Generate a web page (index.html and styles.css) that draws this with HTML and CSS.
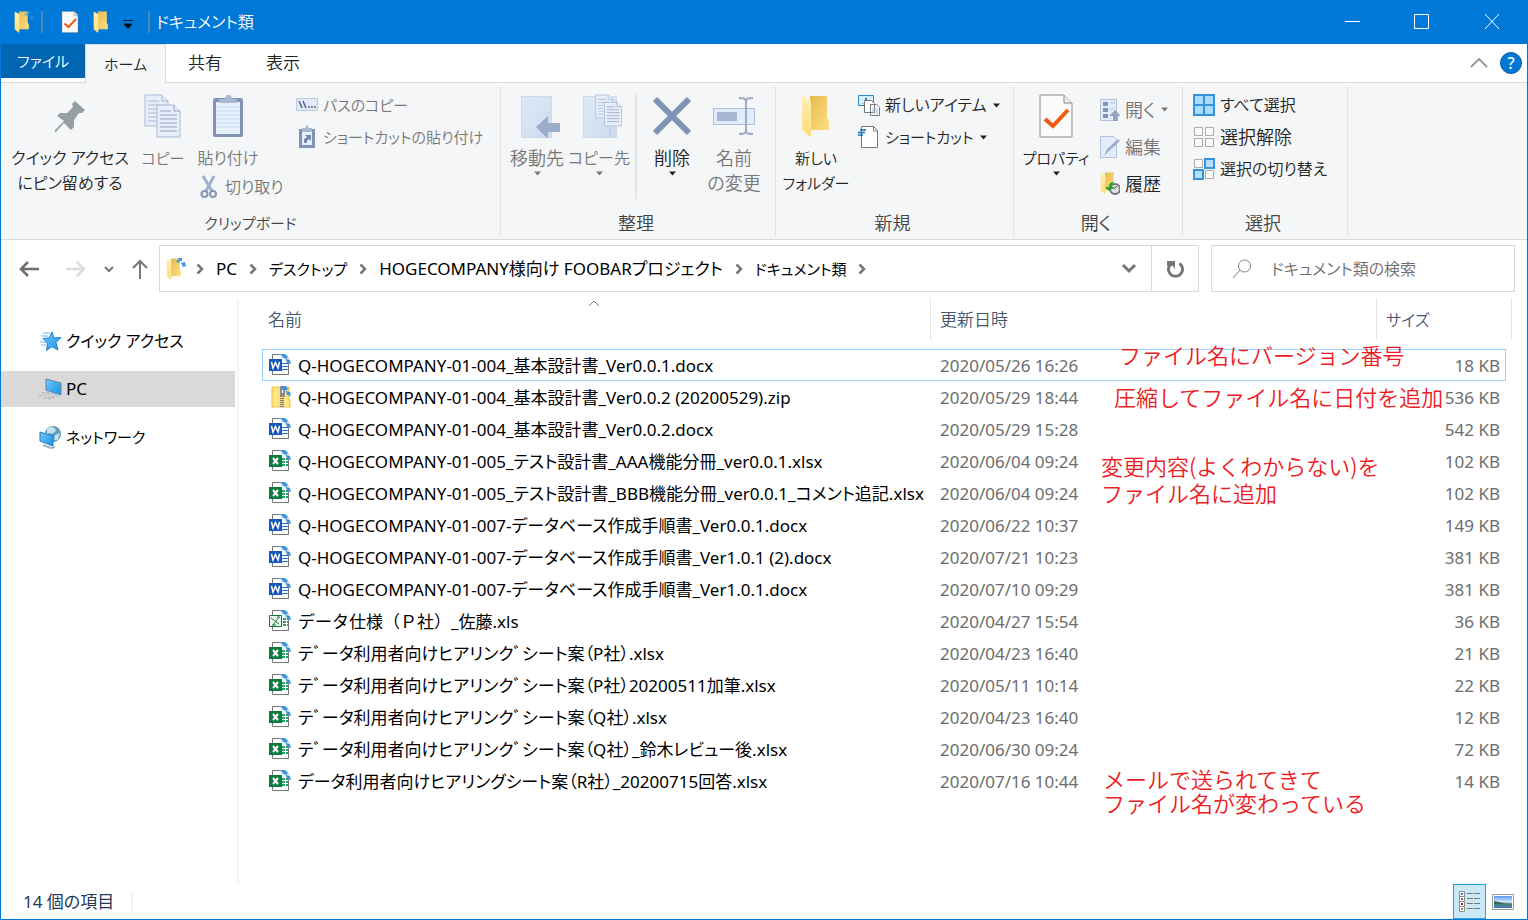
FILE: index.html
```html
<!DOCTYPE html>
<html lang="ja">
<head>
<meta charset="utf-8">
<title>ドキュメント類</title>
<link rel="stylesheet" href="styles.css">
</head>
<body>
<svg class="defs" aria-hidden="true">
  <defs>
    <linearGradient id="g-fold" x1="0" x2="1" y1="0" y2="1"><stop offset="0" stop-color="#e5bb50"/><stop offset="1" stop-color="#ffdf80"/></linearGradient>
    <linearGradient id="g-flap" x1="0" x2="0" y1="0" y2="1"><stop offset="0" stop-color="#fff0b3"/><stop offset="1" stop-color="#ffdc7c"/></linearGradient>
    <linearGradient id="g-blue" x1="0" x2="1" y1="0" y2="1"><stop offset="0" stop-color="#72c8fb"/><stop offset="1" stop-color="#1a93e8"/></linearGradient>
    <linearGradient id="g-pale" x1="0" x2="1" y1="0" y2="1"><stop offset="0" stop-color="#dfe9f7"/><stop offset="1" stop-color="#cbdcee"/></linearGradient>
    <linearGradient id="g-sky" x1="0" x2="0" y1="0" y2="1"><stop offset="0" stop-color="#5b98f5"/><stop offset=".5" stop-color="#d5e8fb"/><stop offset=".65" stop-color="#4d8576"/><stop offset="1" stop-color="#3d78b8"/></linearGradient>
  </defs>
  <symbol id="folder" viewBox="0 0 30 42"><path d="M9 1h17v22l2 2v10H9z" fill="url(#g-fold)"/><path d="M1 1l9 5v35L8 41 1 35z" fill="url(#g-flap)"/></symbol>
  <symbol id="arrows" viewBox="0 0 10 10"><path d="M2 0h4v3H3z M0 3l2-1 2 2-2 1z M5 5l4-1 1 4-3 1z" fill="#3c96e4"/></symbol>
  <symbol id="doc" viewBox="0 0 34 44"><path d="M1 1h24l8 8v34H1z" fill="#fbfbfb" stroke="#8a8a8a"/><path d="M25 1v8h8" fill="#ececec" stroke="#8a8a8a"/><path d="M6 25l8 7 15-16" fill="none" stroke="#f25a13" stroke-width="4"/></symbol>
  <symbol id="down" viewBox="0 0 9 5"><path d="M1 0.5h7L4.500 4.500z" fill="currentColor"/></symbol>
  <symbol id="pages" viewBox="0 0 38 44"><g fill="#e6eefa" stroke="#abbad2"><path d="M1 1h17l6 6v25H1z"/><path d="M18 1v6h6M4 7h11M4 11h16M4 15h16M4 19h16M4 23h16M4 27h16"/><path d="M13 11h17l6 6v26H13z"/><path d="M30 11v6h6M16 17h11M16 21h17M16 25h17M16 29h17M16 33h17M16 37h17" stroke="#91a3c0"/></g></symbol>
  <symbol id="clip" viewBox="0 0 32 44"><rect x="1" y="4" width="30" height="39" rx="2" fill="#8294b5"/><path d="M4 8h24v32H4z" fill="#e6effc"/><path d="M4 13h24M4 17h24M4 21h24M4 25h24M4 29h24M4 33h24" stroke="#c8d8ed"/><path d="M7 9V5h5l3-4h3l3 4h4v4z" fill="#a9b9d2"/></symbol>
  <symbol id="cut" viewBox="0 0 18 24"><path d="M3 1l9 15M14 1L6 16" stroke="#9db0ce" stroke-width="3"/><circle cx="4.500" cy="19" r="3" fill="none" stroke="#8496b7" stroke-width="2"/><circle cx="13" cy="19" r="3" fill="none" stroke="#8496b7" stroke-width="2"/></symbol>
  <symbol id="star" viewBox="0 0 24 22"><path d="M13 2l2 6 7-.5-5 5 2 7.500-6-3.500-5.500 4 1-7L4 8.500l6-.5z" fill="url(#g-blue)" stroke="#1582d0"/><path d="M4 3h7M2 6h7M1 12h6M2 15h5" stroke="#6db7ea"/></symbol>
  <symbol id="pc" viewBox="0 0 24 22"><path d="M7 1l15 4v12L7 12z" fill="url(#g-blue)" stroke="#5d88a6"/><path d="M3 15l5-1 12 4M0 18l10-2M5 20l10-2M9 21l9-2" fill="none" stroke="#a4b2bc" stroke-dasharray="3 1"/></symbol>
  <symbol id="net" viewBox="0 0 24 24"><circle cx="14" cy="9" r="8" fill="#5d9cbd"/><path d="M8 4c4-4 9-1 9 2l-4 3-3-1-2 2zM16 10l5-2-2 7-4 0z" fill="#c4e0e8"/><path d="M1 7l13 4v10L1 16z" fill="url(#g-blue)" stroke="#247cb8"/><path d="M4 20l8 3 4-1" fill="none" stroke="#a4b2bc" stroke-width="2"/></symbol>
  <symbol id="sheet" viewBox="0 0 22 24"><path d="M3.500 1.500h11l5 5v15h-16z" fill="#fbfdfe" stroke="#777"/><path d="M12 1l7 1 2 7-5-1z" fill="#cfe3f2"/><path d="M12 1h4l3 3-2 2-4-2z M17 6l4 1 1 4-4-1z" fill="#3f94df"/></symbol>
  <symbol id="word" viewBox="0 0 22 24"><use href="#sheet"/><path d="M13 10.500h6M13 13.500h6M13 16.500h6" stroke="#2872c8"/><path d="M0 6h13v12H0z" fill="#185abd"/><path d="M2.500 9L4 15l2.500-5.500L9 15l1.500-6" fill="none" stroke="#fff" stroke-width="1.500"/></symbol>
  <symbol id="excel" viewBox="0 0 22 24"><use href="#sheet"/><path d="M13 10h6M13 13h6M13 16h6" stroke="#21a366" stroke-width="2" stroke-dasharray="3 1"/><path d="M0 6h13v12H0z" fill="#107c41"/><path d="M4 9l5 6M9 9l-5 6" stroke="#fff" stroke-width="2"/></symbol>
  <symbol id="xls" viewBox="0 0 22 24"><use href="#sheet"/><path d="M14 10h5M14 13h5M14 16h5" stroke="#21a366" stroke-width="2" stroke-dasharray="3 1"/><path d="M.5 6.500h12v11H.500z" fill="#edf7ef" stroke="#107c41"/><path d="M2 9l8 6M10 8l-6 8M8 8h3M3 16h4" stroke="#107c41"/></symbol>
  <symbol id="zip" viewBox="0 0 22 24"><path d="M3 2h17v13h1v7H3z" fill="#ffe07a" stroke="#e8c14c"/><path d="M7 2v20M17 4v18" stroke="#fff0b0"/><path d="M13 9v14" stroke="#777" stroke-width="4" stroke-dasharray="1 1"/><rect x="11" y="1" width="5" height="11" rx="1" fill="#8d8d88"/><path d="M13 5h1v3h-1z" fill="#fff"/><path d="M13 1h4l2 3-2 2-4-2z M17 6l4 1 1 4-4-1z" fill="#3f94df"/></symbol>
  <symbol id="chev" viewBox="0 0 8 12"><path d="M1.500 1.500L6 6l-4.500 4.500" fill="none" stroke="#777" stroke-width="2.500"/></symbol>
</svg>

<div class="window">
  <header class="titlebar">
    <span class="ticon first"><svg width="16" height="22"><use href="#folder"/></svg><svg class="badge faded" width="10" height="10"><use href="#arrows"/></svg></span>
    <span class="tsep"></span>
    <button class="ticon doc" aria-label="プロパティ"><svg width="18" height="22"><use href="#doc"/></svg></button>
    <button class="ticon fold" aria-label="新しいフォルダー"><svg width="16" height="22"><use href="#folder"/></svg></button>
    <button class="ticon menu" aria-label="クイック アクセス ツール バーのカスタマイズ"><svg width="10" height="9" viewBox="0 0 10 9"><path d="M0 .5h10M1 4h8L5 8.500z" fill="#000" stroke="#001a33"/></svg></button>
    <span class="tsep"></span>
    <h1>ドキュメント類</h1>
    <div class="winbtns">
      <button aria-label="最小化"><svg width="16" height="16"><path d="M1 7.500h15" stroke="#fff"/></svg></button>
      <button aria-label="最大化"><svg width="16" height="16"><path d="M.5.5h14v14H.5z" fill="none" stroke="#fff"/></svg></button>
      <button aria-label="閉じる"><svg width="16" height="16"><path d="M1 0l14 15M15 0L1 15" stroke="#fff"/></svg></button>
    </div>
  </header>

  <nav class="tabs">
    <button class="file">ファイル</button>
    <button class="active">ホーム</button>
    <button class="kanji">共有</button>
    <button class="kanji">表示</button>
    <div class="tabend">
      <button aria-label="リボンの最小化"><svg width="18" height="10"><path d="M1 9l8-8 8 8" fill="none" stroke="#999" stroke-width="2"/></svg></button>
      <button class="help" aria-label="ヘルプ">?</button>
    </div>
  </nav>

  <section class="ribbon">
    <div class="group clipboard">
      <div class="body">
        <button class="big pin"><span class="pic"><svg width="32" height="32"><path d="M21 1l10 9-3 3-3 0-5 7v7l-3 3-7-7-8 9H1v-2l9-9-7-5 3-3h7l6-6-1-3z" fill="#95a0a5"/></svg></span>クイック アクセス<br>にピン留めする</button>
        <button class="big copy" disabled><span class="pic"><svg width="38" height="44"><use href="#pages"/></svg></span>コピー</button>
        <div class="pastecol">
          <button class="big paste" disabled><span class="pic"><svg width="32" height="44"><use href="#clip"/></svg></span>貼り付け</button>
          <button class="small cut" disabled><svg width="18" height="24"><use href="#cut"/></svg>切り取り</button>
        </div>
        <div class="stack">
          <button class="small kana" disabled><svg width="22" height="14"><path d="M.5.5h21v12H.5z" fill="#e0eaf8" stroke="#bccbe0"/><path d="M3 3l3 7M7 3l3 7M12 9h2M15 9h2M18 9h2" stroke="#51658a" stroke-width="1.500"/></svg>パスのコピー</button>
          <button class="small kana" disabled><svg width="22" height="24"><path d="M3 4h16v19H3z" fill="#7f93b5"/><path d="M6 7h10v13H6z" fill="#e6effc"/><path d="M6 7V3h3l2-3 2 3h3v4z" fill="#a9b9d2"/><path d="M8 18v-4l3-2-2-2h6v6l-2-2-2 2v2z" fill="#7388ae"/></svg>ショートカットの貼り付け</button>
        </div>
      </div>
      <h2>クリップボード</h2>
    </div>
    <div class="group organize">
      <div class="body">
        <button class="big kanji shifted" disabled><span class="pic"><svg width="42" height="44"><path d="M2.500 2.500h30v41h-30z" fill="url(#g-pale)" stroke="#ccdaec"/><path d="M17 33l12-11v7h12v9H29v7z" fill="#9badca"/></svg></span>移動先<svg class="arrow" width="9" height="5"><use href="#down"/></svg></button>
        <button class="big shifted" disabled><span class="pic"><svg width="42" height="44"><path d="M2.500 2.500h33v41h-33z" fill="url(#g-pale)" stroke="#ccdaec"/><path d="M29 35v9" stroke="#b5c8df"/><svg x="14" y="0" width="28" height="33"><use href="#pages"/></svg></svg></span>コピー先<svg class="arrow" width="9" height="5"><use href="#down"/></svg></button>
        <span class="minisep"></span>
        <button class="big kanji"><span class="pic"><svg width="38" height="40"><path d="M2 3l34 34M36 3L2 37" stroke="#8294b5" stroke-width="6"/></svg></span>削除<svg class="arrow" width="9" height="5"><use href="#down"/></svg></button>
        <button class="big kanji" disabled><span class="pic"><svg width="42" height="40"><path d="M.5 12.500h41v16H.5z" fill="#e2ecfa" stroke="#abbdd7"/><path d="M4 16h20v9H4z" fill="#a7b7d1"/><path d="M26 2c4 0 7 0 7 4v28c0 4-3 4-7 4M40 2c-4 0-7 0-7 4v28c0 4 3 4 7 4" fill="none" stroke="#9dadc8" stroke-width="2"/></svg></span>名前<br>の変更</button>
      </div>
      <h2>整理</h2>
    </div>
    <div class="group new">
      <div class="body">
        <button class="big kana"><span class="pic"><svg width="30" height="42"><use href="#folder"/></svg></span>新しい<br>フォルダー</button>
        <div class="stack">
          <button class="small"><svg width="22" height="22"><path d="M.5 1.500h15v10H.5z" fill="#d3eefd" stroke="#338abf"/><path d="M3 9h4V4h2v6z" fill="#3b7899"/><path d="M6.500 6.500h7l3 3v9h-10zM12.500 10.500h6l3 3v8h-9z" fill="#fff" stroke="#777"/><path d="M14 15h6M14 17h6M14 19h6" stroke="#9bb9e1"/></svg>新しいアイテム<svg width="9" height="5"><use href="#down"/></svg></button>
          <button class="small kana"><svg width="22" height="24"><path d="M3.500 1.500h12l4 4v17h-16z" fill="#fff" stroke="#777"/><path d="M15.500 1v5h4" fill="none" stroke="#777"/><path d="M2 5h6M0 7.500h7M0 10h5" stroke="#1569b3" stroke-width="1.500"/></svg>ショートカット<svg width="9" height="5"><use href="#down"/></svg></button>
        </div>
      </div>
      <h2>新規</h2>
    </div>
    <div class="group open">
      <div class="body">
        <button class="big kana"><span class="pic"><svg width="34" height="44"><use href="#doc"/></svg></span>プロパティ<svg class="arrow" width="9" height="5"><use href="#down"/></svg></button>
        <div class="stack">
          <button class="small kanji" disabled><svg width="20" height="24"><path d="M.5 1.500h16v21H.5z" fill="#e2ecfa" stroke="#b1c1db"/><path d="M3 4h5v4H3zM3 10h5v4H3zM3 16h5v4H3z" fill="#8295b8"/><path d="M10 5h5M10 11h4" stroke="#b1c1db"/><path d="M15 12l6 6h-3v5h-5v-5h-4z" fill="#93a5c3"/></svg>開く<svg width="9" height="5"><use href="#down"/></svg></button>
          <button class="small kanji" disabled><svg width="20" height="24"><path d="M.5 1.500h13l3 3v18H.5z" fill="#e2ecfa" stroke="#b1c1db"/><path d="M4 21l3-7L18 4l2 2L8 17z" fill="#9db0ce"/></svg>編集</button>
          <button class="small kanji"><svg width="20" height="24"><svg width="16" height="22"><use href="#folder"/></svg><circle cx="15" cy="17" r="5" fill="#ddd" stroke="#777" stroke-width="2"/><path d="M12 16h3l2-2" stroke="#555" fill="none"/><path d="M5 15h4c0-4 2-5 5-5-2 2-2 3-2 5h2l-5 4z" fill="#23a52b"/></svg>履歴</button>
        </div>
      </div>
      <h2>開く</h2>
    </div>
    <div class="group select">
      <div class="body">
        <div class="stack">
          <button class="small"><svg width="22" height="22"><path d="M1 1h20v20H1z" fill="#a8dbfb"/><path d="M1 1h20v20H1zM11 1v20M1 11h20" fill="none" stroke="#3393dd" stroke-width="2"/></svg>すべて選択</button>
          <button class="small kanji"><svg width="22" height="22"><path d="M1.500 1.500h8v8h-8zM12.500 1.500h8v8h-8zM1.500 12.500h8v8h-8zM12.500 12.500h8v8h-8z" fill="#fafafa" stroke="#aaa"/></svg>選択解除</button>
          <button class="small"><svg width="22" height="22"><path d="M1.500 1.500h8v8h-8zM12.500 12.500h8v8h-8z" fill="#fafafa" stroke="#aaa"/><path d="M12 1h9v9h-9zM1 12h9v9H1z" fill="#b4e0fc" stroke="#3393dd" stroke-width="2"/></svg>選択の切り替え</button>
        </div>
      </div>
      <h2>選択</h2>
    </div>
  </section>

  <div class="addressrow">
    <div class="history">
      <button aria-label="戻る"><svg width="20" height="16"><path d="M9 1L2 8l7 7M2 8h18" fill="none" stroke="#6e6e6e" stroke-width="2.500"/></svg></button>
      <button aria-label="進む" disabled><svg width="20" height="16"><path d="M11 1l7 7-7 7M18 8H0" fill="none" stroke="#dcdcdc" stroke-width="2.500"/></svg></button>
      <button aria-label="最近表示した場所"><svg width="10" height="8"><path d="M1 2l4 4 4-4" fill="none" stroke="#777" stroke-width="2"/></svg></button>
      <button aria-label="上へ"><svg width="16" height="20"><path d="M1 9l7-7 7 7M8 2v18" fill="none" stroke="#777" stroke-width="2"/></svg></button>
    </div>
    <div class="address">
      <span class="ticon place"><svg width="16" height="22"><use href="#folder"/></svg><svg class="badge" width="10" height="10"><use href="#arrows"/></svg></span>
      <svg width="8" height="12"><use href="#chev"/></svg><a href="#">PC</a>
      <svg width="8" height="12"><use href="#chev"/></svg><a href="#" class="kana">デスクトップ</a>
      <svg width="8" height="12"><use href="#chev"/></svg><a href="#">HOGECOMPANY様向け FOOBARプロジェクト</a>
      <svg width="8" height="12"><use href="#chev"/></svg><a href="#" class="kana">ドキュメント類</a>
      <svg width="8" height="12"><use href="#chev"/></svg>
      <button class="drop" aria-label="以前の場所"><svg width="16" height="11"><path d="M2 2l6 6 6-6" fill="none" stroke="#777" stroke-width="3"/></svg></button>
      <button class="refresh" aria-label="最新の情報に更新"><svg width="18" height="18"><path d="M13.500 3.500a7 7 0 1 1-8 0" fill="none" stroke="#777" stroke-width="3"/><path d="M1 1h8v8l-2-3H1z" fill="#777"/></svg></button>
    </div>
    <label class="search"><svg width="20" height="20"><circle cx="12.500" cy="7" r="6" fill="none" stroke="#808080"/><path d="M8 11l-7 8" stroke="#808080"/></svg><input type="search" placeholder="ドキュメント類の検索" aria-label="ドキュメント類の検索"></label>
  </div>

  <main>
    <nav class="tree">
      <a href="#"><svg width="24" height="22"><use href="#star"/></svg>クイック アクセス</a>
      <a href="#" class="current"><svg width="24" height="22"><use href="#pc"/></svg>PC</a>
      <a href="#" class="kana"><svg width="24" height="24"><use href="#net"/></svg>ネットワーク</a>
    </nav>
    <div class="files">
      <table>
        <thead><tr><th class="name" scope="col">名前<svg class="sort" width="12" height="7"><path d="M1 6l5-5 5 5" fill="none" stroke="#777"/></svg></th><th class="date" scope="col">更新日時</th><th class="size" scope="col">サイズ</th></tr></thead>
        <tbody>
          <tr class="focused"><td><svg width="22" height="24"><use href="#word"/></svg>Q-HOGECOMPANY-01-004_基本設計書_Ver0.0.1.docx</td><td>2020/05/26 16:26</td><td>18 KB</td></tr>
          <tr><td><svg width="22" height="24"><use href="#zip"/></svg>Q-HOGECOMPANY-01-004_基本設計書_Ver0.0.2 (20200529).zip</td><td>2020/05/29 18:44</td><td>536 KB</td></tr>
          <tr><td><svg width="22" height="24"><use href="#word"/></svg>Q-HOGECOMPANY-01-004_基本設計書_Ver0.0.2.docx</td><td>2020/05/29 15:28</td><td>542 KB</td></tr>
          <tr><td><svg width="22" height="24"><use href="#excel"/></svg>Q-HOGECOMPANY-01-005_テスト設計書_AAA機能分冊_ver0.0.1.xlsx</td><td>2020/06/04 09:24</td><td>102 KB</td></tr>
          <tr><td><svg width="22" height="24"><use href="#excel"/></svg>Q-HOGECOMPANY-01-005_テスト設計書_BBB機能分冊_ver0.0.1_コメント追記.xlsx</td><td>2020/06/04 09:24</td><td>102 KB</td></tr>
          <tr><td><svg width="22" height="24"><use href="#word"/></svg>Q-HOGECOMPANY-01-007-データベース作成手順書_Ver0.0.1.docx</td><td>2020/06/22 10:37</td><td>149 KB</td></tr>
          <tr><td><svg width="22" height="24"><use href="#word"/></svg>Q-HOGECOMPANY-01-007-データベース作成手順書_Ver1.0.1 (2).docx</td><td>2020/07/21 10:23</td><td>381 KB</td></tr>
          <tr><td><svg width="22" height="24"><use href="#word"/></svg>Q-HOGECOMPANY-01-007-データベース作成手順書_Ver1.0.1.docx</td><td>2020/07/10 09:29</td><td>381 KB</td></tr>
          <tr class="fullwidth"><td><svg width="22" height="24"><use href="#xls"/></svg>データ仕様（Ｐ社）_佐藤.xls</td><td>2020/04/27 15:54</td><td>36 KB</td></tr>
          <tr><td><svg width="22" height="24"><use href="#excel"/></svg>テﾞータ利用者向けヒアリンクﾞシート案（P社）.xlsx</td><td>2020/04/23 16:40</td><td>21 KB</td></tr>
          <tr><td><svg width="22" height="24"><use href="#excel"/></svg>テﾞータ利用者向けヒアリンクﾞシート案（P社）20200511加筆.xlsx</td><td>2020/05/11 10:14</td><td>22 KB</td></tr>
          <tr><td><svg width="22" height="24"><use href="#excel"/></svg>テﾞータ利用者向けヒアリンクﾞシート案（Q社）.xlsx</td><td>2020/04/23 16:40</td><td>12 KB</td></tr>
          <tr><td><svg width="22" height="24"><use href="#excel"/></svg>テﾞータ利用者向けヒアリンクﾞシート案（Q社）_鈴木レビュー後.xlsx</td><td>2020/06/30 09:24</td><td>72 KB</td></tr>
          <tr><td><svg width="22" height="24"><use href="#excel"/></svg>データ利用者向けヒアリングシート案（R社）_20200715回答.xlsx</td><td>2020/07/16 10:44</td><td>14 KB</td></tr>
        </tbody>
      </table>
      <p class="note n1">ファイル名にバージョン番号</p>
      <p class="note n2">圧縮してファイル名に日付を追加</p>
      <p class="note n3">変更内容(よくわからない)を<br>ファイル名に追加</p>
      <p class="note n4">メールで送られてきて<br>ファイル名が変わっている</p>
    </div>
  </main>

  <footer class="status">
    <span class="count">14 個の項目</span>
    <button class="view on" aria-label="詳細"><svg width="22" height="22"><g fill="#fff" stroke="#8f8f8f"><path d="M.5.5h5v5h-5zM.5 5.500h5v5h-5zM.5 10.500h5v5h-5zM.5 15.500h5v5h-5z"/></g><path d="M2 2h2v2H2z" fill="#4177a8"/><path d="M2 7h2v2H2z" fill="#8a6a4a"/><path d="M2 12h2v2H2z" fill="#c42020"/><path d="M2 17h2v2H2z" fill="#7ba24a"/><path d="M8 2.500h6M15 2.500h6M8 7.500h6M15 7.500h6M8 12.500h6M15 12.500h6M8 17.500h6M15 17.500h6" stroke="#777"/></svg></button>
    <button class="view" aria-label="大アイコン"><svg width="22" height="16"><path d="M.5.500h21v15H.5z" fill="#fff" stroke="#999"/><path d="M2 2h18v12H2z" fill="url(#g-sky)"/><path d="M2 7l5 1 8 2H2z" fill="#37684f"/></svg></button>
  </footer>
</div>
</body>
</html>
```
FILE: styles.css
```css
* { box-sizing: border-box; }

body {
  margin: 0;
  font: 17px/24px "Noto Sans", "Noto Sans CJK JP", sans-serif;
  font-feature-settings: "palt";
  color: #000;
  background: #fff;
}

.defs { position: absolute; width: 0; height: 0; }
svg { display: block; flex: none; }
h1, h2, p { margin: 0; font-weight: inherit; }
a { color: inherit; text-decoration: none; }

button {
  margin: 0;
  padding: 0;
  border: 0;
  background: none;
  color: inherit;
  font: inherit;
  font-feature-settings: inherit;
}

.window {
  display: flex;
  flex-direction: column;
  min-height: 100vh;
  border: 1px solid #0078d7;
  border-top: 0;
}

/* Title bar */
.titlebar {
  display: flex;
  align-items: center;
  height: 44px;
  background: #0078d7;
  color: #fff;
}
.ticon { position: relative; display: block; }
.badge { position: absolute; left: 10px; top: 0; }
.faded { opacity: .6; }
.first { margin: 0 11px 0 13px; }
.doc { margin: 0 14px 0 18px; }
.fold { margin-right: 14px; }
.menu { margin: 4px 15px 0 0; }
.tsep { width: 2px; height: 22px; background: #4a87ba; }
.titlebar h1 { margin-left: 6px; font-size: 16px; font-weight: 350; }
.winbtns { display: flex; margin-left: auto; }
.winbtns button { display: grid; place-items: center; width: 70px; height: 44px; }

/* Tabs */
.tabs {
  display: flex;
  height: 39px;
  border-bottom: 1px solid #dadbdc;
  color: #222;
  font-size: 15px;
  font-weight: 350;
}
.tabs > button { width: 78px; height: 38px; }
.tabs .file { width: 84px; height: 34px; background: #0065b3; color: #fff; }
.tabs .active {
  width: 81px;
  height: 39px;
  border: 1px solid #dadbdc;
  border-bottom: 0;
  background: #f5f6f7;
}
.tabs .kanji { font-size: 17px; }
.tabend { display: flex; align-items: center; gap: 12px; margin-left: auto; padding-right: 5px; }
.help {
  width: 22px;
  height: 22px;
  border: 1px solid #0a5aa0;
  border-radius: 50%;
  background: #0078d7;
  color: #fff;
  font-size: 16px;
  font-weight: 500;
  line-height: 20px;
}

/* Ribbon */
.ribbon {
  display: flex;
  height: 157px;
  border-bottom: 1px solid #dadbdc;
  background: #f5f6f7;
  color: #222;
  font-size: 16px;
  font-weight: 350;
  white-space: nowrap;
}
.group {
  display: flex;
  flex-direction: column;
  margin: 3px 0;
  border-right: 1px solid #e2e3e4;
}
.body { display: flex; flex: 1; }
.group h2 { height: 25px; padding-right: 4px; color: #444; font-size: 18px; line-height: 25px; text-align: center; }
.clipboard { width: 500px; }
.organize { width: 275px; }
.new { width: 238px; }
.open { width: 169px; }
.select { width: 165px; }
.group.clipboard h2 { padding-right: 0; font-size: 15px; }

.big {
  display: block;
  align-self: flex-start;
  width: 62px;
  padding-top: 8px;
  line-height: 25px;
  text-align: center;
}
.kana { font-size: 15px; }
.ribbon .kanji { font-size: 18px; }
.ribbon :disabled { color: #777; }
.pic { display: grid; place-items: center; height: 44px; margin-bottom: 8px; }
.shifted .pic { padding-left: 6px; }
.arrow { margin: 0 auto; }
.pin { width: 138px; }
.copy { width: 48px; font-size: 15px; }
.pastecol { width: 109px; }
.paste { width: 82px; }
.small.cut { gap: 7px; height: 32px; margin-left: 13px; }
.organize .body { padding-left: 5px; }
.minisep { width: 2px; height: 106px; margin: 7px 4px 0 5px; background: #e2e3e4; }
.new .big { width: 80px; margin-right: 2px; }
.open .big { width: 84px; margin-right: 2px; }
.stack { padding-top: 3px; }
.small { display: flex; align-items: center; gap: 5px; height: 32px; }
.open .stack { padding-top: 5px; }
.open .small { height: 37px; }
.select .stack { padding-left: 10px; }

/* Address bar */
.addressrow { display: flex; align-items: center; height: 57px; padding: 0 12px 0 18px; }
.history { display: flex; align-items: center; width: 140px; }
.history button:nth-child(2) { margin-left: 27px; }
.history button:nth-child(3) { margin-left: 18px; }
.history button:nth-child(4) { margin-left: 18px; }
.address {
  display: flex;
  flex: 1;
  align-items: center;
  height: 47px;
  border: 1px solid #d9d9d9;
  white-space: nowrap;
}
.address > svg { margin: 0 12px; }
.place { width: 18px; margin-left: 6px; }
.drop { margin-left: auto; padding: 0 14px; }
.refresh { display: grid; place-items: center; width: 47px; height: 45px; border-left: 1px solid #d9d9d9; }
.search {
  display: flex;
  flex: 0 1 304px;
  align-items: center;
  gap: 19px;
  height: 47px;
  margin-left: 12px;
  padding-left: 20px;
  border: 1px solid #d9d9d9;
}
.search input {
  flex: 1;
  min-width: 0;
  padding: 0;
  border: 0;
  outline: 0;
  background: none;
  font: inherit;
  font-size: 16px;
  font-weight: 350;
  font-feature-settings: inherit;
}
.search input::placeholder { color: #6d6d6d; opacity: 1; }

/* Folder tree and file list */
main { display: flex; flex: 1; }
.tree {
  display: flex;
  flex-direction: column;
  gap: 12px;
  width: 238px;
  margin-top: 2px;
  padding: 24px 2px 0 0;
  border-right: 2px solid #f5f5f5;
  font-size: 16px;
}
.tree a { display: flex; align-items: center; gap: 3px; height: 36px; padding-left: 38px; }
.tree .current { background: #d9d9d9; font-size: 17px; }

.files { position: relative; flex: 1; padding: 1px 21px 0 23px; }
table { width: 100%; border-spacing: 0; white-space: nowrap; }
th {
  position: relative;
  height: 42px;
  padding: 2px 0 0 9px;
  border-left: 1px solid #e5e5e5;
  color: #45566e;
  font-weight: 350;
  text-align: left;
}
th.name { padding-left: 6px; border-left: 0; }
th.date { width: 446px; }
th.size { width: 130px; font-size: 16px; }
th.size::after {
  content: "";
  position: absolute;
  top: 0;
  right: -6px;
  width: 1px;
  height: 42px;
  background: #e5e5e5;
}
.sort { position: absolute; left: calc(50% - 8px); top: 2px; }
tbody::before { content: ""; display: block; height: 9px; }
td { height: 32px; padding: 1px 6px 0 10px; color: #6d6d6d; }
td:first-child { padding-left: 7px; color: #000; }
td:last-child { text-align: right; }
td svg { display: inline-block; margin-right: 7px; vertical-align: -5px; }
.focused { outline: 1px solid #99d1ff; outline-offset: -1px; }
.fullwidth { font-feature-settings: normal; }

.note {
  position: absolute;
  color: #ed1c24;
  font-family: "Noto Sans CJK JP", sans-serif;
  font-feature-settings: normal;
  font-size: 22px;
  font-weight: 350;
  line-height: 27px;
  white-space: nowrap;
}
.n1 { left: 880px; top: 44px; }
.n2 { left: 875px; top: 86px; }
.n3 { left: 862px; top: 155px; }
.n4 { left: 864px; top: 469px; line-height: 24px; }

/* Status bar */
.status { display: flex; align-items: center; height: 35px; color: #26395a; }
.count { margin-right: auto; padding: 0 17px 0 22px; border-right: 2px solid #f2f2f2; line-height: 18px; }
.view { display: grid; place-items: center; width: 33px; height: 35px; }
.view.on { border: 1px solid #26a0da; background: #cbe8f6; }
.view:last-child { margin-right: 8px; }
```
